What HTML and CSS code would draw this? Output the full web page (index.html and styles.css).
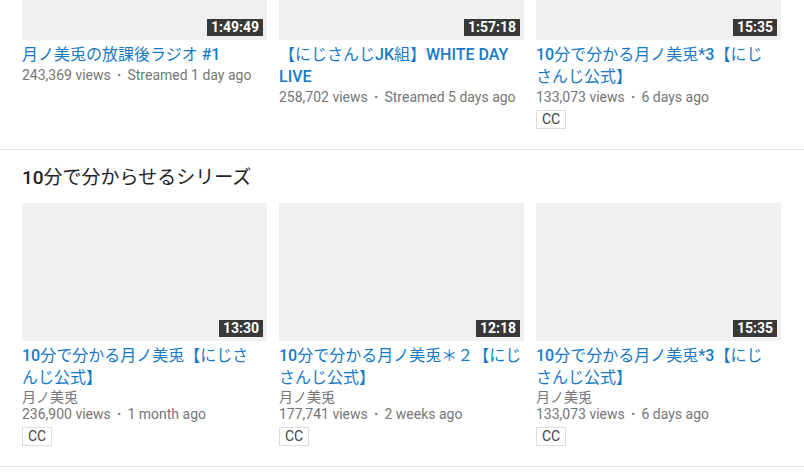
FILE: index.html
```html
<!DOCTYPE html>
<html lang="ja">
<head>
    <meta charset="UTF-8">
    <meta name="viewport" content="width=device-width, initial-scale=1.0">
    <title>月ノ美兎 - 動画</title>
    <link rel="stylesheet" href="styles.css">
</head>
<body>
    <div class="page">
        <section class="shelf shelf-first">
            <div class="grid">
                <div class="video">
                    <div class="thumb"><span class="time">1:49:49</span></div>
                    <a class="title" href="#">月ノ美兎の放課後ラジオ <b>#1</b></a>
                    <p class="meta">243,369 views <span class="dot">•</span> Streamed 1 day ago</p>
                </div>
                <div class="video">
                    <div class="thumb"><span class="time">1:57:18</span></div>
                    <a class="title" href="#">【にじさんじ<b>JK</b>組】<b>WHITE DAY LIVE</b></a>
                    <p class="meta">258,702 views <span class="dot">•</span> Streamed 5 days ago</p>
                </div>
                <div class="video">
                    <div class="thumb"><span class="time">15:35</span></div>
                    <a class="title" href="#"><b>10</b>分で分かる月ノ美兎<b>*3</b>【にじ<br>さんじ公式】</a>
                    <p class="meta">133,073 views <span class="dot">•</span> 6 days ago</p>
                    <span class="cc">CC</span>
                </div>
            </div>
        </section>

        <section class="shelf">
            <h2 class="shelf-title"><b>10</b>分で分からせるシリーズ</h2>
            <div class="grid">
                <div class="video">
                    <div class="thumb"><span class="time">13:30</span></div>
                    <a class="title" href="#"><b>10</b>分で分かる月ノ美兎【にじさ<br>んじ公式】</a>
                    <p class="channel">月ノ美兎</p>
                    <p class="meta">236,900 views <span class="dot">•</span> 1 month ago</p>
                    <span class="cc">CC</span>
                </div>
                <div class="video">
                    <div class="thumb"><span class="time">12:18</span></div>
                    <a class="title" href="#"><b>10</b>分で分かる月ノ美兎＊２【にじ<br>さんじ公式】</a>
                    <p class="channel">月ノ美兎</p>
                    <p class="meta">177,741 views <span class="dot">•</span> 2 weeks ago</p>
                    <span class="cc">CC</span>
                </div>
                <div class="video">
                    <div class="thumb"><span class="time">15:35</span></div>
                    <a class="title" href="#"><b>10</b>分で分かる月ノ美兎<b>*3</b>【にじ<br>さんじ公式】</a>
                    <p class="channel">月ノ美兎</p>
                    <p class="meta">133,073 views <span class="dot">•</span> 6 days ago</p>
                    <span class="cc">CC</span>
                </div>
            </div>
        </section>
    </div>
</body>
</html>
```

FILE: styles.css
```css
body {
    margin: 0;
    background: #fff;
    font-family: Roboto, "Noto Sans CJK JP", sans-serif;
    overflow: hidden;
}
.page {
    margin-top: -98px;
}
.shelf {
    padding: 16px 22px 20px;
    border-bottom: 1px solid #e3e3e3;
}
.shelf-first {
    padding-top: 0;
}
.shelf-title {
    margin: 0 0 13px;
    font-size: 19px;
    line-height: 24px;
    font-weight: normal;
    color: #222;
}
.shelf-title b {
    font-weight: 500;
}
.grid {
    display: grid;
    grid-template-columns: repeat(3, 245px);
    column-gap: 12px;
    align-items: start;
}
.thumb {
    position: relative;
    height: 138px;
    background: #f0f0f0;
}
.time {
    position: absolute;
    right: 4px;
    bottom: 4px;
    padding: 0 4px;
    height: 17px;
    line-height: 17px;
    font-size: 14px;
    font-weight: bold;
    color: #fff;
    background: #383838;
}
.title {
    display: block;
    margin-top: 4px;
    font-size: 16px;
    line-height: 22px;
    color: #167ac6;
    text-decoration: none;
}
.title b {
    font-weight: 500;
}
.channel, .meta {
    margin: 0;
    font-size: 14px;
    line-height: 18px;
    color: #767676;
}
.channel {
    line-height: 16px;
}
.dot {
    font-size: 11px;
    padding: 0 3px;
    vertical-align: 1px;
}
.cc {
    display: inline-block;
    margin-top: 3px;
    padding: 0 5px;
    border: 1px solid #ddd;
    font-size: 14px;
    line-height: 17px;
    color: #444;
}
```
